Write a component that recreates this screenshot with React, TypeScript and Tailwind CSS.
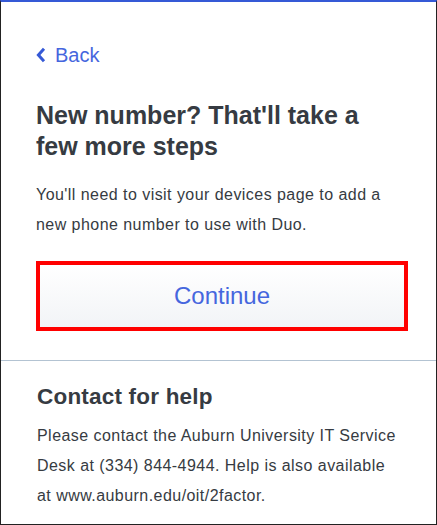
export default function App() {
  return (
    <div
      className="w-[437px] h-[525px] flex flex-col bg-white border-x border-b border-[#222] border-t-2 border-t-[#3559d6] text-[#363b42]"
      style={{ fontFamily: '"Liberation Sans", Arial, sans-serif' }}
    >
      <div className="pl-[35px] pt-[41px] pb-[29px] flex flex-col">
        <button className="flex items-center gap-[9px] text-[20px] leading-[24px] text-[#4566de] w-fit">
          <svg className="w-[10px] h-[16px]" viewBox="0 0 10 16" fill="none">
            <path d="M8 1.8 L2.4 8 L8 14.2" stroke="#3559d6" strokeWidth="3" />
          </svg>
          <span>Back</span>
        </button>
        <h1 className="mt-[33px] text-[25px] leading-[31px] font-bold w-[371px]">
          New number? That'll take a few more steps
        </h1>
        <p className="mt-[18px] text-[16px] leading-[30px] tracking-[0.45px] w-[371px]">
          You'll need to visit your devices page to add a new phone number to use with Duo.
        </p>
        <button className="mt-[21px] w-[372px] h-[70px] border-4 border-[#ff0000] bg-gradient-to-b from-white to-[#f2f4f7] text-[24px] text-[#4566de]">
          Continue
        </button>
      </div>
      <div className="border-t border-[#b3c3d2]" />
      <div className="pl-[36px] pt-[22px]">
        <h2 className="text-[22.5px] leading-[28px] font-bold tracking-[0.2px]">Contact for help</h2>
        <p className="mt-[10px] text-[16px] leading-[30px] tracking-[0.45px] w-[365px]">
          Please contact the Auburn University IT Service Desk at (334) 844-4944. Help is also available at www.auburn.edu/oit/2factor.
        </p>
      </div>
    </div>
  )
}
